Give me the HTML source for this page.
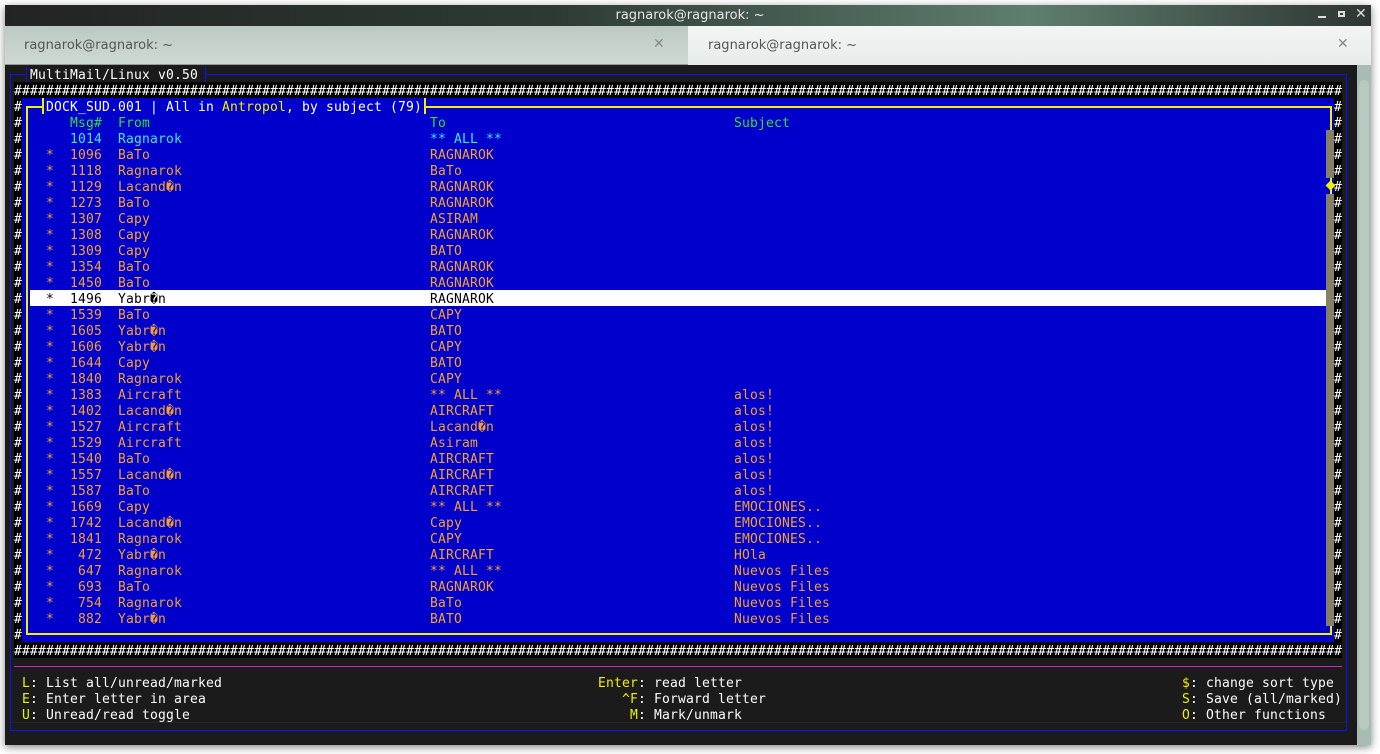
<!DOCTYPE html>
<html><head><meta charset="utf-8"><style>
*{margin:0;padding:0;box-sizing:border-box}
body{width:1380px;height:754px;background:#fff;position:relative;overflow:hidden;font-family:"DejaVu Sans Mono","Liberation Mono",monospace}
.a{position:absolute}
.t{position:absolute;font-size:13px;letter-spacing:0.174px;line-height:20px;height:16px;white-space:pre;overflow:visible}
.w{color:#fff}.o{color:#f5a030}.c{color:#3ee8ee}.g{color:#33dd33}.y{color:#f0f000}.k{color:#000}
.h{background:#000;color:#fff}
</style></head><body>
<div class="a" style="left:5px;top:5px;width:1366px;height:740px;background:#1b1b1b;box-shadow:0 2px 8px rgba(0,0,0,.5)"></div>
<div class="a" style="left:5px;top:5px;width:1366px;height:21px;background:linear-gradient(90deg,#232323,#2d3a33 40%,#5f7e70 75%,#2e3631)"></div>
<div class="a" style="left:0;top:5px;width:1380px;height:21px;text-align:center;color:#e8e8e8;font:13px/21px 'DejaVu Sans','Liberation Sans',sans-serif">ragnarok@ragnarok: ~</div>
<div class="a" style="left:1318px;top:16px;width:8px;height:2px;background:#ddd"></div>
<div class="a" style="left:1338px;top:11px;width:7px;height:6px;border:2px solid #ddd"></div>
<div class="a" style="left:1355px;top:7px;color:#ddd;font:bold 14px/14px 'DejaVu Sans',sans-serif">✕</div>
<div class="a" style="left:5px;top:26px;width:683px;height:39px;background:linear-gradient(#bcc9c3,#cfd9d4);border-bottom:1px solid #999"></div>
<div class="a" style="left:688px;top:26px;width:683px;height:39px;background:linear-gradient(#f3f5f4,#e6ebe9)"></div>
<div class="a" style="left:24px;top:26px;color:#555;font:13px/39px 'DejaVu Sans','Liberation Sans',sans-serif">ragnarok@ragnarok: ~</div>
<div class="a" style="left:708px;top:26px;color:#555;font:13px/39px 'DejaVu Sans','Liberation Sans',sans-serif">ragnarok@ragnarok: ~</div>
<div class="a" style="left:653px;top:37px;color:#888;font:bold 14px/14px 'DejaVu Sans',sans-serif">✕</div>
<div class="a" style="left:1337px;top:37px;color:#888;font:bold 14px/14px 'DejaVu Sans',sans-serif">✕</div>
<div class="a" style="left:1357px;top:65px;width:14px;height:680px;background:#a9bcb3"></div>
<div class="a" style="left:1359px;top:80px;width:10px;height:650px;background:#b8c9c1;border-radius:5px"></div>
<div class="a" style="left:10px;top:74px;width:1337px;height:657px;border:1px solid #1010ff"></div>
<div class="a" style="left:26px;top:66px;width:180px;height:16px;background:#1b1b1b;border-left:1px solid #1010ff;border-right:1px solid #1010ff"></div>
<div class="t w" style="left:30px;top:66px">MultiMail/Linux v0.50</div>
<div class="t h" style="left:14px;top:82px">######################################################################################################################################################################</div>
<div class="t h" style="left:14px;top:642px">######################################################################################################################################################################</div>
<div class="a" style="left:22px;top:98px;width:1312px;height:544px;background:#0000cc"></div>
<div class="a" style="left:14px;top:98px;width:8px;height:544px;background:#000"></div>
<div class="a" style="left:1334px;top:98px;width:8px;height:544px;background:#000"></div>
<div class="a" style="left:26px;top:106px;width:1306px;height:529px;border:2px solid #f0f000"></div>
<div class="a" style="left:42px;top:98px;width:384px;height:16px;background:#0000cc;border-left:2px solid #f0f000;border-right:2px solid #f0f000"></div>
<div class="t w" style="left:46px;top:98px">DOCK_SUD.001 | All in <span class="y">Antropol</span>, by subject (79)</div>
<div class="a" style="left:1326px;top:130px;width:8px;height:48px;background:#858065"></div>
<div class="a" style="left:1326px;top:194px;width:8px;height:432px;background:#858065"></div>
<div class="a" style="left:1327px;top:182px;width:7px;height:7px;background:#f0f000;transform:rotate(45deg)"></div>
<div class="a" style="left:30px;top:290px;width:1296px;height:16px;background:#fff"></div>
<div id="rows"></div>
<div class="t g" style="left:70px;top:114px">Msg#</div><div class="t g" style="left:118px;top:114px">From</div><div class="t g" style="left:430px;top:114px">To</div><div class="t g" style="left:734px;top:114px">Subject</div>
<script>
var d=[["1014","Ragnarok","** ALL **",""],["1096","BaTo","RAGNAROK",""],["1118","Ragnarok","BaTo",""],["1129","Lacand\uFFFDn","RAGNAROK",""],["1273","BaTo","RAGNAROK",""],["1307","Capy","ASIRAM",""],["1308","Capy","RAGNAROK",""],["1309","Capy","BATO",""],["1354","BaTo","RAGNAROK",""],["1450","BaTo","RAGNAROK",""],["1496","Yabr\uFFFDn","RAGNAROK",""],["1539","BaTo","CAPY",""],["1605","Yabr\uFFFDn","BATO",""],["1606","Yabr\uFFFDn","CAPY",""],["1644","Capy","BATO",""],["1840","Ragnarok","CAPY",""],["1383","Aircraft","** ALL **","alos!"],["1402","Lacand\uFFFDn","AIRCRAFT","alos!"],["1527","Aircraft","Lacand\uFFFDn","alos!"],["1529","Aircraft","Asiram","alos!"],["1540","BaTo","AIRCRAFT","alos!"],["1557","Lacand\uFFFDn","AIRCRAFT","alos!"],["1587","BaTo","AIRCRAFT","alos!"],["1669","Capy","** ALL **","EMOCIONES.."],["1742","Lacand\uFFFDn","Capy","EMOCIONES.."],["1841","Ragnarok","CAPY","EMOCIONES.."],["472","Yabr\uFFFDn","AIRCRAFT","HOla"],["647","Ragnarok","** ALL **","Nuevos Files"],["693","BaTo","RAGNAROK","Nuevos Files"],["754","Ragnarok","BaTo","Nuevos Files"],["882","Yabr\uFFFDn","BATO","Nuevos Files"]];
var h="";
for(var r=0;r<34;r++){var y=98+16*r;h+='<div class="t w" style="left:14px;top:'+y+'px">#</div><div class="t w" style="left:1334px;top:'+y+'px">#</div>';}
d.forEach(function(e,i){var y=130+16*i;var c=i==0?"c":(i==10?"k":"o");
if(i>0)h+='<div class="t '+c+'" style="left:46px;top:'+y+'px">*</div>';
h+='<div class="t '+c+'" style="left:'+(70+8*(4-e[0].length))+'px;top:'+y+'px">'+e[0]+'</div>';
h+='<div class="t '+c+'" style="left:118px;top:'+y+'px">'+e[1]+'</div>';
h+='<div class="t '+c+'" style="left:430px;top:'+y+'px">'+e[2]+'</div>';
if(e[3])h+='<div class="t '+c+'" style="left:734px;top:'+y+'px">'+e[3]+'</div>';});
document.getElementById("rows").innerHTML=h;
</script>
<div class="a" style="left:14px;top:666px;width:1328px;height:1px;background:#d020d0"></div>
<div class="a" style="left:11px;top:722px;width:1335px;height:1px;background:#262626"></div>
<div class="t w" style="left:22px;top:674px"><span class="y">L</span>: List all/unread/marked</div>
<div class="t w" style="left:22px;top:690px"><span class="y">E</span>: Enter letter in area</div>
<div class="t w" style="left:22px;top:706px"><span class="y">U</span>: Unread/read toggle</div>
<div class="t w" style="left:598px;top:674px"><span class="y">Enter</span>: read letter</div>
<div class="t w" style="left:622px;top:690px"><span class="y">^F</span>: Forward letter</div>
<div class="t w" style="left:630px;top:706px"><span class="y">M</span>: Mark/unmark</div>
<div class="t w" style="left:1182px;top:674px"><span class="y">$</span>: change sort type</div>
<div class="t w" style="left:1182px;top:690px"><span class="y">S</span>: Save (all/marked)</div>
<div class="t w" style="left:1182px;top:706px"><span class="y">O</span>: Other functions</div>
</body></html>
